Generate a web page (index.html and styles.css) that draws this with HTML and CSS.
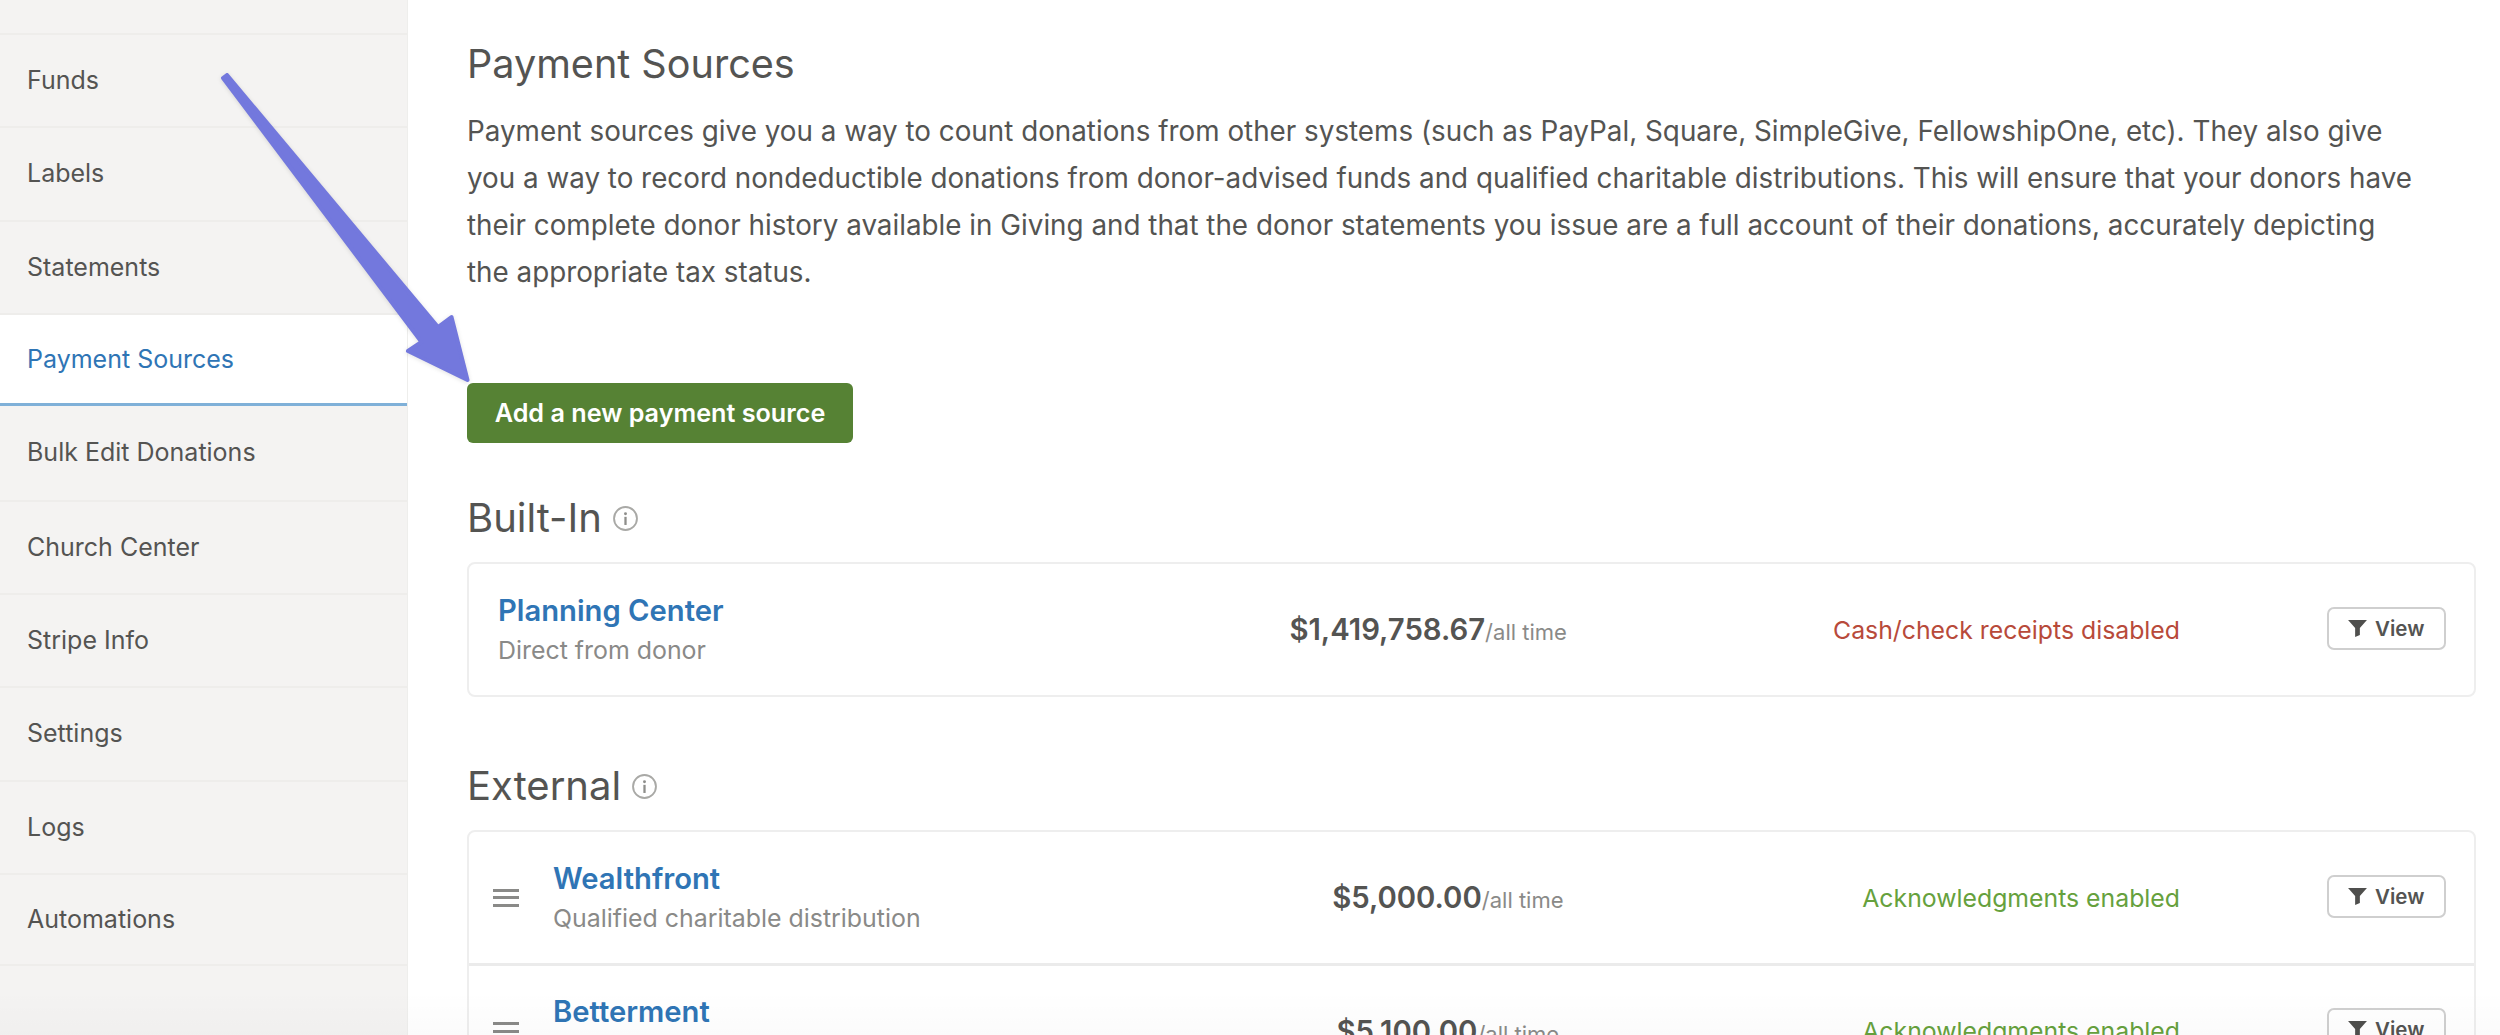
FILE: index.html
```html
<!DOCTYPE html>
<html lang="en">
<head>
<meta charset="utf-8">
<title>Payment Sources</title>
<link rel="stylesheet" href="styles.css">
</head>
<body>
<div class="page">
  <nav class="sidebar">
    <a class="nav-item">Funds</a>
    <a class="nav-item">Labels</a>
    <a class="nav-item">Statements</a>
    <a class="nav-item active">Payment Sources</a>
    <a class="nav-item">Bulk Edit Donations</a>
    <a class="nav-item">Church Center</a>
    <a class="nav-item">Stripe Info</a>
    <a class="nav-item">Settings</a>
    <a class="nav-item">Logs</a>
    <a class="nav-item">Automations</a>
  </nav>
  <main class="content">
    <h1 class="title">Payment Sources</h1>
    <p class="intro">Payment sources give you a way to count donations from other systems (such as PayPal, Square, SimpleGive, FellowshipOne, etc). They also give you a way to record nondeductible donations from donor-advised funds and qualified charitable distributions. This will ensure that your donors have their complete donor history available in Giving and that the donor statements you issue are a full account of their donations, accurately depicting<br>the appropriate tax status.</p>
    <button class="add-btn">Add a new payment source</button>

    <h2 class="section-title first">Built-In
      <svg class="info" viewBox="0 0 24 24"><circle cx="12" cy="12" r="11" fill="none" stroke="#a9a9a6" stroke-width="1.8"/><circle cx="12" cy="7.4" r="1.4" fill="#8e8e8b"/><rect x="10.9" y="10.4" width="2.2" height="7.8" fill="#8e8e8b"/></svg>
    </h2>
    <section class="card">
      <div class="row builtin">
        <div class="cols">
          <div class="name"><a class="link">Planning Center</a><span class="sub">Direct from donor</span></div>
          <div class="amount"><b>$1,419,758.67</b><span>/all time</span></div>
          <div class="status off">Cash/check receipts disabled</div>
        </div>
        <button class="view"><svg class="funnel" viewBox="0 0 20 18"><path d="M0 0H20L12.5 8.5V16L7.5 18V8.5Z"/></svg>View</button>
      </div>
    </section>

    <h2 class="section-title">External
      <svg class="info" viewBox="0 0 24 24"><circle cx="12" cy="12" r="11" fill="none" stroke="#a9a9a6" stroke-width="1.8"/><circle cx="12" cy="7.4" r="1.4" fill="#8e8e8b"/><rect x="10.9" y="10.4" width="2.2" height="7.8" fill="#8e8e8b"/></svg>
    </h2>
    <section class="card">
      <div class="row">
        <span class="drag"><i></i><i></i><i></i></span>
        <div class="cols">
          <div class="name"><a class="link">Wealthfront</a><span class="sub">Qualified charitable distribution</span></div>
          <div class="amount"><b>$5,000.00</b><span>/all time</span></div>
          <div class="status on">Acknowledgments enabled</div>
        </div>
        <button class="view"><svg class="funnel" viewBox="0 0 20 18"><path d="M0 0H20L12.5 8.5V16L7.5 18V8.5Z"/></svg>View</button>
      </div>
      <div class="row">
        <span class="drag"><i></i><i></i><i></i></span>
        <div class="cols">
          <div class="name"><a class="link">Betterment</a><span class="sub">Qualified charitable distribution</span></div>
          <div class="amount"><b>$5,100.00</b><span>/all time</span></div>
          <div class="status on">Acknowledgments enabled</div>
        </div>
        <button class="view"><svg class="funnel" viewBox="0 0 20 18"><path d="M0 0H20L12.5 8.5V16L7.5 18V8.5Z"/></svg>View</button>
      </div>
    </section>
  </main>
  <svg class="arrow" viewBox="0 0 2500 1035">
    <path d="M223 78 L227 75 L438 327 L451.5 317 L467.5 380 L408 351 L421.5 342 Z" fill="#7378dd" stroke="#7378dd" stroke-width="4" stroke-linejoin="round"/>
  </svg>
  <div class="fade"></div>
</div>
</body>
</html>
```
FILE: styles.css
```css
* { box-sizing: border-box; }
html, body { margin: 0; height: 100%; overflow: hidden; background: #fff; }
body { font-family: Inter, "Noto Sans", sans-serif; color: #545452; }
.page { position: relative; display: flex; width: 2500px; height: 1035px; overflow: hidden; }

.sidebar { width: 408px; flex: none; padding-top: 33px; background: #f4f3f2; border-right: 1px solid #eeeeec; }
.nav-item { display: flex; align-items: center; height: 93.33px; padding: 0 0 1px 27px; font-size: 25px; color: #545452; border-top: 2px solid #eeedeb; }
.nav-item.active { padding-bottom: 0; color: #2f75b5; background: #fff; border-bottom: 3px solid #7fb0d8; }
.nav-item.active + .nav-item { border-top: 0; }
.nav-item:last-child { border-bottom: 2px solid #eeedeb; }

.content { flex: 1; padding: 40px 24.5px 0 59px; min-width: 0; }
.title { margin: 0; font-size: 39.6px; font-weight: 400; line-height: 48px; }
.intro { width: 1960px; margin: 19.5px 0 87px; font-size: 27.8px; line-height: 47px; }
.add-btn { display: block; width: 386px; height: 60px; padding: 0; border: 0; border-radius: 6px; background: #568234; color: #fff; font: 600 25.2px Inter, sans-serif; }
.section-title { display: flex; align-items: center; gap: 11px; margin: 65px 0 20px; font-size: 40px; font-weight: 400; line-height: 48px; }
.section-title.first { margin-top: 51.5px; }
.info { width: 25px; height: 25px; }

.card { border: 2px solid #eeeeee; border-radius: 8px; background: #fff; }
.row { display: flex; align-items: center; height: 131px; padding: 0 28px 0 24px; }
.row.builtin { padding-left: 29px; }
.row + .row { height: 133px; border-top: 3px solid #ebebeb; }
.drag { display: flex; flex-direction: column; gap: 4.5px; width: 26px; margin-right: 34px; flex: none; }
.drag i { display: block; height: 3px; background: #8a8a88; }
.cols { flex: 1; display: grid; grid-template-columns: 40% 30% 30%; align-items: center; min-width: 0; }
.builtin .cols { grid-template-columns: 40.3% 30% 29.7%; }
.name { display: flex; flex-direction: column; padding-top: 1px; }
.link { font-size: 29.2px; font-weight: 600; line-height: 38px; color: #2f75b5; }
.sub { margin-top: 1px; font-size: 24.9px; line-height: 38px; color: #8a8a88; }
.amount { text-align: center; white-space: nowrap; }
.amount b { font-size: 29.3px; font-weight: 600; }
.amount span { font-size: 22px; color: #8a8a88; }
.status { text-align: right; font-size: 24.8px; }
.status.off { color: #b84a3a; }
.status.on { color: #66a13d; }
.view { display: flex; align-items: center; justify-content: center; gap: 8px; flex: none; width: 118.5px; height: 43px; margin: -3px 0 0 147px; padding: 0; border: 2px solid #cfcfcf; border-radius: 7px; background: #fff; color: #545452; font: 600 20.5px Inter, sans-serif; }
.funnel { width: 19px; height: 17px; fill: #4f4f4d; }

.arrow { position: absolute; left: 0; top: 0; width: 2500px; height: 1035px; pointer-events: none; filter: drop-shadow(0 1px 2px rgba(0,0,0,.12)); }
.fade { position: absolute; left: 0; right: 0; bottom: 0; height: 45px; background: linear-gradient(rgba(0,0,0,0), rgba(0,0,0,.016)); pointer-events: none; }
```
